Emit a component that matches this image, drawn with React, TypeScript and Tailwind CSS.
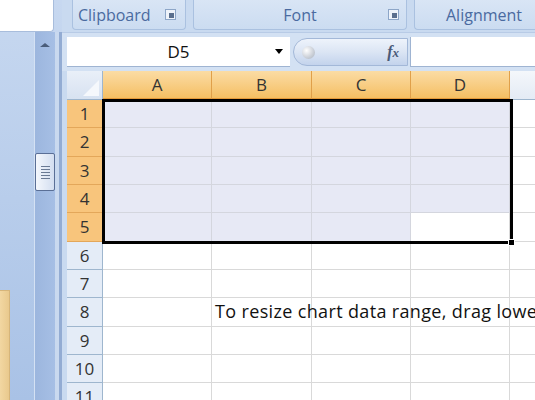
import React from "react";

const cols = [109, 100, 99, 99];
const colNames = ["A", "B", "C", "D"];
const ROW_H = 28.33;

function Launcher() {
  return (
    <div className="w-[11px] h-[11px] border border-[#8da6c8] bg-[#eef3fa] flex items-end justify-end p-[1px]">
      <div className="w-[5px] h-[5px] bg-[#5a6f8e]" />
    </div>
  );
}

export default function App() {
  const rows = Array.from({ length: 11 }, (_, i) => i + 1);
  return (
    <div
      className="w-[535px] h-[400px] overflow-hidden flex bg-[#c4d6ee]"
      style={{ fontFamily: "'Open Sans', 'Liberation Sans', sans-serif" }}
    >
      {/* Left panel */}
      <div className="w-[62px] h-full flex flex-col relative bg-gradient-to-b from-[#c7d8f0] to-[#a9c2e6] shrink-0">
        <div className="h-[32px] w-[54px] shrink-0 bg-white rounded-br-[4px] border-r border-b border-[#a8bddc]" />
        <div className="flex-1 flex">
          <div className="w-[34px] relative">
            <div className="absolute left-0 top-[258px] w-[10px] h-[120px] bg-gradient-to-r from-[#f2d7a2] to-[#e9c98d] border-t border-r border-[#d6b57a]" />
          </div>
          <div className="w-[1px] bg-[#d4e1f3]" />
          <div className="w-[20px] bg-gradient-to-r from-[#9cb6de] to-[#a6bfe5] flex flex-col items-center pt-[11px]">
            <div className="w-0 h-0 border-l-[5px] border-r-[5px] border-b-[4px] border-l-transparent border-r-transparent border-b-[#4a5d7a]" />
            <div className="mt-[106px] w-[20px] h-[38px] bg-gradient-to-r from-[#f4f7fc] to-[#d3def0] border border-[#5a6f96] rounded-[2px] flex flex-col items-center justify-center gap-[2px]">
              <div className="w-[9px] h-[1px] bg-[#6a7a94]" />
              <div className="w-[9px] h-[1px] bg-[#6a7a94]" />
              <div className="w-[9px] h-[1px] bg-[#6a7a94]" />
              <div className="w-[9px] h-[1px] bg-[#6a7a94]" />
              <div className="w-[9px] h-[1px] bg-[#6a7a94]" />
            </div>
          </div>
          <div className="w-[4px] bg-[#c9d9ef]" />
          <div className="w-[3px] bg-[#93acd3]" />
        </div>
      </div>

      {/* Main */}
      <div className="flex-1 flex flex-col min-w-0 bg-[#c9daf0]">
        {/* Ribbon group labels */}
        <div className="h-[32px] shrink-0 flex gap-[7px] pl-[10px] items-start">
          <div className="w-[114px] h-[30px] bg-gradient-to-b from-[#d9e5f5] to-[#cbdcf1] border border-t-0 border-[#aac1e0] rounded-b-[4px] flex items-center pl-[5px] pr-[9px] justify-between">
            <span className="text-[16px] text-[#4a6aa0] leading-none mt-[1px]">Clipboard</span>
            <Launcher />
          </div>
          <div className="w-[214px] h-[30px] bg-gradient-to-b from-[#d9e5f5] to-[#cbdcf1] border border-t-0 border-[#aac1e0] rounded-b-[4px] flex items-center justify-center relative">
            <span className="text-[16px] text-[#4a6aa0] leading-none mt-[1px]">Font</span>
            <div className="absolute right-[7px] top-[9px]">
              <Launcher />
            </div>
          </div>
          <div className="flex-1 h-[30px] bg-gradient-to-b from-[#d9e5f5] to-[#cbdcf1] border border-t-0 border-r-0 border-[#aac1e0] rounded-bl-[4px] flex items-center pl-[31px]">
            <span className="text-[16px] text-[#4a6aa0] leading-none mt-[1px]">Alignment</span>
          </div>
        </div>

        {/* Formula bar */}
        <div className="h-[39px] shrink-0 flex items-start pt-[4px] pl-[5px] border-t border-[#b8cbe6] bg-[#d3e1f3]">
          <div className="w-[223px] h-[30px] bg-white border-b border-[#9fb4d2] flex items-center relative">
            <span className="absolute left-0 right-0 text-center text-[17px] text-[#111] leading-none">D5</span>
            <div className="absolute left-[208px] top-[12px] w-0 h-0 border-l-[4px] border-r-[4px] border-t-[5px] border-l-transparent border-r-transparent border-t-black" />
          </div>
          <div className="w-[3px]" />
          <div className="w-[115px] h-[28px] mt-[1px] rounded-l-[14px] bg-gradient-to-b from-[#eef3fb] via-[#dbe5f4] to-[#c3d3ec] border border-[#a3b8d8] flex items-center justify-between pl-[8px] pr-[8px]">
            <div className="w-[13px] h-[13px] rounded-full bg-[radial-gradient(circle_at_35%_35%,#ffffff,#c9ced6_60%,#a9b1bd)]" />
            <span
              className="text-[16px] italic font-bold text-[#4a5a78] leading-none"
              style={{ fontFamily: "'Liberation Serif', serif" }}
            >
              f<span className="text-[13px]">x</span>
            </span>
          </div>
          <div className="w-[2px]" />
          <div className="flex-1 h-[30px] bg-white border-l border-b border-[#9fb4d2]" />
        </div>

        {/* Grid */}
        <div className="flex-1 min-h-0 overflow-hidden pl-[5px] relative">
          <div className="bg-white h-full relative">
            {/* Header row */}
            <div className="flex h-[29px]">
              <div className="w-[36px] h-full bg-gradient-to-b from-[#e9eff8] to-[#d7e2f1] border-r border-b border-[#9eb6ce] relative">
                <div
                  className="absolute right-[3px] bottom-[3px] w-0 h-0"
                  style={{ borderBottom: "16px solid #f5f8fc", borderLeft: "16px solid transparent" }}
                />
              </div>
              {colNames.map((c, i) => (
                <div
                  key={c}
                  className="h-full bg-gradient-to-b from-[#fbdca4] to-[#f5bf62] border-r border-[#e0a04a] border-b-2 border-b-[#e49a3a] flex items-center justify-center text-[17px] text-[#333]"
                  style={{ width: cols[i] }}
                >
                  {c}
                </div>
              ))}
              <div className="flex-1 h-full bg-gradient-to-b from-[#f4f7fb] to-[#e4ebf5] border-b border-[#9eb6ce]" />
            </div>
            {/* Rows */}
            {rows.map((r) => {
              const sel = r <= 5;
              return (
                <div key={r} className="flex" style={{ height: ROW_H }}>
                  <div
                    className={
                      sel
                        ? "w-[36px] h-full bg-[#f8c57c] border-r border-b border-[#e3a75a] flex items-center justify-center text-[17px] text-[#333]"
                        : "w-[36px] h-full bg-[#e4ecf7] border-r border-b border-[#9eb6ce] flex items-center justify-center text-[17px] text-[#333]"
                    }
                  >
                    {r}
                  </div>
                  {cols.map((w, i) => {
                    const filled = sel && !(r === 5 && i === 3);
                    return (
                      <div
                        key={i}
                        className={
                          filled
                            ? "h-full bg-[#e7e9f5] border-r border-b border-[#d4d6de] relative"
                            : "h-full border-r border-b border-[#d9d9d9] relative"
                        }
                        style={{ width: w }}
                      >
                        {r === 8 && i === 1 ? (
                          <span className="absolute left-[3px] top-0 bottom-0 flex items-center whitespace-nowrap text-[18px] tracking-[0.35px] text-[#111] z-10">
                            To resize chart data range, drag lower right corner of range.
                          </span>
                        ) : null}
                      </div>
                    );
                  })}
                  <div className="flex-1 h-full border-b border-[#d9d9d9]" />
                </div>
              );
            })}
            {/* Selection border */}
            <div
              className="absolute border-[3px] border-black pointer-events-none"
              style={{ left: 35, top: 28, width: 411, height: ROW_H * 5 + 3 }}
            >
              <div className="absolute right-[-5px] bottom-[-5px] w-[7px] h-[7px] bg-black border border-white" />
            </div>
          </div>
        </div>
      </div>
    </div>
  );
}
